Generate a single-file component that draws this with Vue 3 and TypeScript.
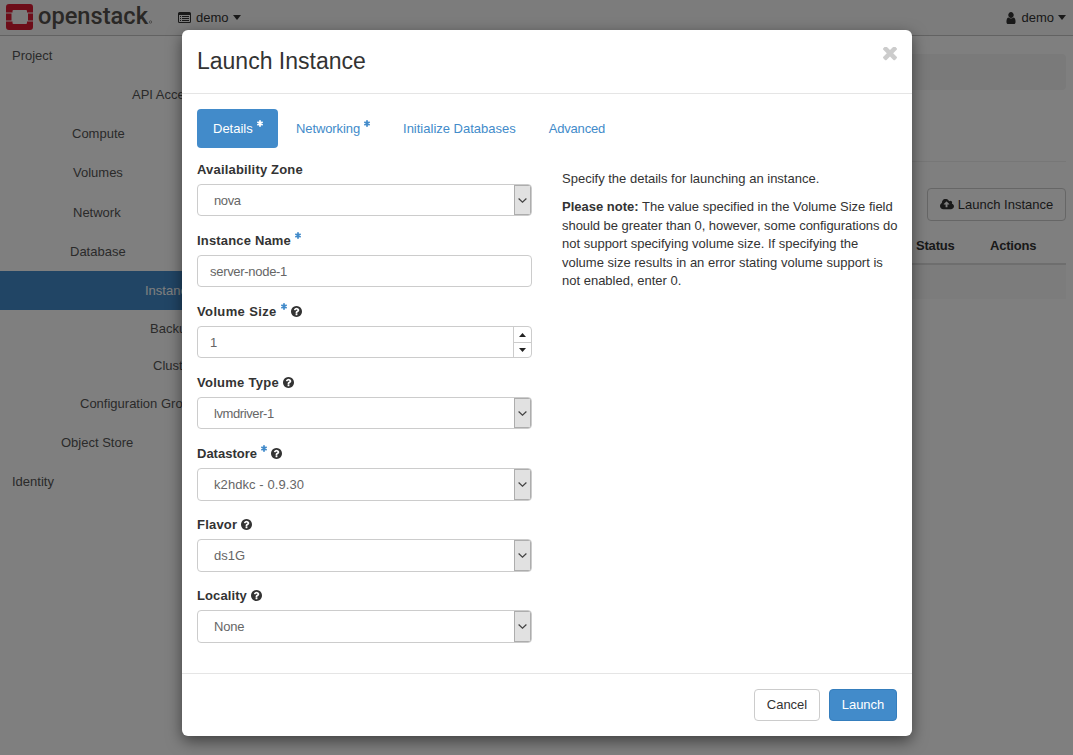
<script setup lang="ts">
interface NavItem { label: string; indent: number; height: number; active?: boolean }
interface Field { label: string; value: string; kind: 'select' | 'text' | 'number'; track?: number; valueTrack?: number; required?: boolean; help?: boolean; tall?: boolean }

const nav: NavItem[] = [
  { label: 'Project', indent: 12, height: 39 },
  { label: 'API Access', indent: 132, height: 39 },
  { label: 'Compute', indent: 72, height: 39 },
  { label: 'Volumes', indent: 73, height: 39 },
  { label: 'Network', indent: 73, height: 40 },
  { label: 'Database', indent: 70, height: 39 },
  { label: 'Instances', indent: 145, height: 39, active: true },
  { label: 'Backups', indent: 150, height: 37 },
  { label: 'Clusters', indent: 153, height: 37 },
  { label: 'Configuration Groups', indent: 80, height: 39 },
  { label: 'Object Store', indent: 61, height: 39 },
  { label: 'Identity', indent: 12, height: 39 },
]

const tabs = [
  { label: 'Details', required: true, active: true, track: 0 },
  { label: 'Networking', required: true, track: -0.1 },
  { label: 'Initialize Databases', track: 0 },
  { label: 'Advanced', track: -0.2 },
]

const fields: Field[] = [
  { label: 'Availability Zone', value: 'nova', kind: 'select', track: 0.18, valueTrack: -0.4 },
  { label: 'Instance Name', value: 'server-node-1', kind: 'text', track: 0.17, valueTrack: -0.3, required: true },
  { label: 'Volume Size', value: '1', kind: 'number', track: 0.37, required: true, help: true },
  { label: 'Volume Type', value: 'lvmdriver-1', kind: 'select', track: 0.27, valueTrack: -0.4, help: true },
  { label: 'Datastore', value: 'k2hdkc - 0.9.30', kind: 'select', valueTrack: 0.08, required: true, help: true, tall: true },
  { label: 'Flavor', value: 'ds1G', kind: 'select', track: 0.2, help: true, tall: true },
  { label: 'Locality', value: 'None', kind: 'select', track: 0.1, valueTrack: -0.2, help: true, tall: true },
]

const spacing = (v?: number) => ({ letterSpacing: (v ?? 0) + 'px' })
</script>

<template>
  <div class="screen">
    <header class="topbar">
      <svg class="brand" width="150" height="35" viewBox="0 0 150 35">
        <g fill="#da1a32">
          <path d="M3 4h21a3 3 0 0 1 3 3v5.500h-6V11a1 1 0 0 0-1-1H7.500a1 1 0 0 0-1 1v1.500H0V7a3 3 0 0 1 3-3z" />
          <path d="M0 13.500h5.500V20.500H0zM22 13.500h5V20.500h-5z" />
          <path d="M0 21.500h6.500V23a1 1 0 0 0 1 1H20a1 1 0 0 0 1-1v-1.500h6V27a3 3 0 0 1-3 3H3a3 3 0 0 1-3-3z" />
        </g>
        <text class="wordmark" x="32" y="23.700" textLength="110" lengthAdjust="spacingAndGlyphs">openstack</text>
        <circle cx="144.500" cy="22" r="1.200" fill="none" stroke="#8a8683" stroke-width=".8" />
      </svg>
      <div class="menu project">
        <svg width="13" height="11" viewBox="0 0 13 11">
          <path d="M1.500 0h10A1.500 1.500 0 0 1 13 1.500v8a1.500 1.500 0 0 1-1.500 1.500h-10A1.500 1.500 0 0 1 0 9.500v-8A1.500 1.500 0 0 1 1.500 0zM1 3v6.500q0 .5.500.5h10q.5 0 .5-.5V3z" fill="#333" fill-rule="evenodd" />
          <path d="M2 4h1v1H2zM4 4h7v1H4zM2 6h1v1H2zM4 6h7v1H4zM2 8h1v1H2zM4 8h7v1H4z" fill="#333" />
        </svg>
        <span>demo</span><i class="caret" />
      </div>
      <div class="menu user">
        <svg width="10" height="12" viewBox="192 128 1408 1536" preserveAspectRatio="none"><path fill="#333" d="M1536 1399q0 109-62.500 187t-150.500 78h-854q-88 0-150.500-78t-62.500-187q0-85 8.500-160.500t31.500-152 58.500-131 94-89 134.500-34.500q131 128 313 128t313-128q76 0 134.500 34.500t94 89 58.500 131 31.500 152 8.500 160.500zm-256-887q0 159-112.500 271.500t-271.500 112.500-271.500-112.500-112.500-271.500 112.500-271.500 271.500-112.500 271.500 112.500 112.500 271.500z" /></svg>
        <span>demo</span><i class="caret" />
      </div>
    </header>

    <div class="page">
      <nav class="sidebar">
        <a v-for="n in nav" :key="n.label" :class="{ active: n.active }" :style="{ paddingLeft: n.indent + 'px', height: n.height + 'px' }">{{ n.label }}</a>
      </nav>
      <main class="content">
        <div class="breadcrumb" />
        <div class="title-rule" />
        <button class="btn launch-top">
          <svg width="14" height="11" viewBox="-96 256 1920 1280"><path fill="#333" d="M1216 864q0-14-9-23l-352-352q-9-9-23-9t-23 9l-351 351q-10 12-10 24 0 14 9 23t23 9h224v352q0 13 9.500 22.500t22.500 9.500h192q13 0 22.500-9.500t9.500-22.500v-352h224q13 0 22.500-9.500t9.500-22.500zm640 288q0 159-112.500 271.500t-271.500 112.500h-1088q-185 0-316.500-131.500t-131.500-316.500q0-130 70-240t188-165q-2-30-2-43 0-212 150-362t362-150q156 0 285.500 87t188.500 231q71-62 166-62 106 0 181 75t75 181q0 76-41 138 130 31 213.500 135.500t83.500 238.500z" transform="translate(-32 0)" /></svg>
          <span>Launch Instance</span>
        </button>
        <div class="thead"><b>Status</b><b>Actions</b></div>
        <div class="trow" />
      </main>
    </div>

    <div class="backdrop">
      <section class="modal">
        <div class="modal-head">
          <h3>Launch Instance</h3>
          <svg class="close" width="14" height="14" viewBox="302 430 1188 1188"><path fill="#ccc" d="M1490 1322q0 40-28 68l-136 136q-28 28-68 28t-68-28l-294-294-294 294q-28 28-68 28t-68-28l-136-136q-28-28-28-68t28-68l294-294-294-294q-28-28-28-68t28-68l136-136q28-28 68-28t68 28l294 294 294-294q28-28 68-28t68 28l136 136q28 28 28 68t-28 68l-294 294 294 294q28 28 28 68z" /></svg>
        </div>
        <div class="modal-body">
          <div class="tabs">
            <a v-for="t in tabs" :key="t.label" :class="{ active: t.active }">
              <span :style="spacing(t.track)">{{ t.label }}</span>
              <svg v-if="t.required" class="star" width="6" height="7" viewBox="0 0 6 7"><path d="M3 .2v6.600M.3 1.900l5.400 3.200M5.700 1.900L.3 5.100" stroke="currentColor" stroke-width="1.800" /></svg>
            </a>
          </div>
          <div class="columns">
            <div class="form">
              <div v-for="f in fields" :key="f.label" class="field">
                <label>
                  <span :style="spacing(f.track)">{{ f.label }}</span>
                  <svg v-if="f.required" class="star" width="6" height="7" viewBox="0 0 6 7"><path d="M3 .2v6.600M.3 1.900l5.400 3.200M5.700 1.900L.3 5.100" stroke="currentColor" stroke-width="1.800" /></svg>
                  <svg v-if="f.help" class="help" width="11" height="11" viewBox="128 128 1536 1536"><path fill="#333" d="M1024 1376v-192q0-14-9-23t-23-9h-192q-14 0-23 9t-9 23v192q0 14 9 23t23 9h192q14 0 23-9t9-23zm256-672q0-88-55.500-163t-138.500-116-170-41q-243 0-371 213-15 24 8 42l132 100q7 6 19 6 16 0 25-12 53-68 86-92 34-24 86-24 48 0 85.500 26t37.500 59q0 38-20 61t-68 45q-63 28-115.500 86.500t-52.500 125.500v36q0 14 9 23t23 9h192q14 0 23-9t9-23q0-19 21.500-49.500t54.500-49.500q32-18 49-28.500t46-35 44.500-48 28-60.500 12.500-81zm384 192q0 209-103 385.500t-279.500 279.500-385.500 103-385.500-103-279.500-279.500-103-385.500 103-385.500 279.500-279.500 385.500-103 385.500 103 279.500 279.500 103 385.500z" /></svg>
                </label>
                <div class="control" :class="[f.kind, { tall: f.tall }]">
                  <span class="value" :style="spacing(f.valueTrack)">{{ f.value }}</span>
                  <div v-if="f.kind === 'select'" class="drop">
                    <svg width="9" height="5" viewBox="0 0 9 5"><path d="M.6.5L4.500 4.200 8.400.5" fill="none" stroke="#444" stroke-width="1.200" /></svg>
                  </div>
                  <div v-if="f.kind === 'number'" class="spin">
                    <div><svg width="7" height="4" viewBox="0 0 7 4"><path d="M0 4L3.500 0 7 4z" fill="#222" /></svg></div>
                    <div><svg width="7" height="4" viewBox="0 0 7 4"><path d="M0 0L3.500 4 7 0z" fill="#222" /></svg></div>
                  </div>
                </div>
              </div>
            </div>
            <div class="notes">
              <p>Specify the details for launching an instance.</p>
              <p><b>Please note:</b> The value specified in the Volume Size field<br><span class="tight">should be greater than 0, however, some configurations do</span><br>not support specifying volume size. If specifying the<br>volume size results in an error stating volume support is<br>not enabled, enter 0.</p>
            </div>
          </div>
        </div>
        <div class="modal-foot">
          <button class="btn">Cancel</button>
          <button class="btn primary">Launch</button>
        </div>
      </section>
    </div>
  </div>
</template>

<style>
body { margin: 0; overflow: hidden; }
</style>

<style scoped>
* { box-sizing: border-box; }
.screen { position: relative; width: 1073px; height: 755px; overflow: hidden; background: #fff; color: #333; font: 13px/18.500px "Liberation Sans", Arial, sans-serif; }
svg { display: block; flex: none; }
.brand { overflow: visible; }
.topbar { display: flex; height: 36px; padding: 0 7px 0 6px; background: #f8f8f8; border-bottom: 1px solid #c4c4c4; }
.wordmark { font: 500 24.500px Roboto, sans-serif; fill: #55504c; }
.menu { display: flex; align-items: center; height: 35px; }
.project { margin-left: 22px; }
.user { margin-left: auto; }
.menu span { margin-left: 5px; padding-top: 1px; }
.caret { width: 0; height: 0; margin-left: 4px; border: 4px solid transparent; border-top: 5px solid #333; border-bottom: 0; }
.page { display: flex; height: 719px; }
.sidebar { width: 230px; flex: none; }
.sidebar a { display: flex; align-items: center; padding-top: 2px; color: #555; white-space: nowrap; }
.sidebar .active { background: #428bca; color: #fff; }
.content { flex: 1; display: flex; flex-direction: column; padding: 18px 7px 0 20px; }
.breadcrumb { height: 36px; background: #f5f5f5; border-radius: 4px; }
.title-rule { height: 72px; border-bottom: 1px solid #eee; }
.btn { display: flex; align-items: center; justify-content: center; height: 32px; padding: 0; border: 1px solid #ccc; border-radius: 4px; background: #fff; color: #333; font: inherit; width: 66px; }
.launch-top { align-self: flex-end; width: 139px; height: 33px; margin-top: 26px; gap: 4px; }
.launch-top span { padding-top: 2px; }
.thead { display: flex; height: 44px; border-bottom: 2px solid #ddd; padding: 16px 0 0 666px; }
.thead b { width: 74px; flex: none; letter-spacing: -.2px; }
.trow { height: 34px; background: #f9f9f9; }
.backdrop { position: absolute; inset: 0; padding: 30px 161px 0 182px; background: rgba(0, 0, 0, .5); }
.modal { height: 706px; display: flex; flex-direction: column; background: #fff; border-radius: 6px; box-shadow: 0 5px 15px rgba(0, 0, 0, .5); }
.modal-head { display: flex; justify-content: space-between; height: 64px; padding: 17px 15px 0 15px; border-bottom: 1px solid #e5e5e5; }
h3 { margin: 0; font-size: 23px; font-weight: 400; line-height: 28px; }
.modal-body { flex: 1; padding: 15px; }
.tabs { display: flex; gap: 2px; }
.tabs a { display: flex; align-items: center; height: 39px; padding: 1px 15px 0 16px; color: #428bca; border-radius: 4px; white-space: nowrap; }
.tabs .active { width: 81px; background: #428bca; color: #fff; }
.tabs span { padding-top: 1px; }
.star { margin: -11px 0 0 4px; color: #428bca; }
label .star { margin-top: -10px; }
.active .star { color: #fff; }
.columns { display: grid; grid-template-columns: 335px 335px; gap: 30px; padding-top: 12px; }
.form { display: grid; grid-auto-rows: 71px; }
label { display: flex; align-items: center; height: 19px; margin-bottom: 5px; font-weight: 700; white-space: nowrap; }
label span { padding-top: 2px; }
.help { margin-left: 4px; }
.control { display: flex; align-items: stretch; height: 32px; border: 1px solid #ccc; border-radius: 4px; overflow: hidden; color: #666; }
.tall { height: 33px; }
.value { flex: 1; align-self: center; padding: 2px 0 0 12px; }
.select .value { padding-left: 16px; }
.drop { display: flex; align-items: center; justify-content: center; width: 17px; padding-right: 1px; background: #e1e1e1; border: 1px solid #adadad; }
.spin { width: 18px; border-left: 1px solid #ccc; }
.spin div { display: flex; height: 15px; align-items: center; justify-content: center; }
.spin div + div { border-top: 1px solid #ccc; }
.notes { padding-top: 10px; }
.notes p { margin: 0 0 9.500px; white-space: nowrap; }
.tight { letter-spacing: -.05px; }
.modal-foot { display: flex; justify-content: flex-end; gap: 9px; height: 63px; padding: 15px; border-top: 1px solid #e5e5e5; }
.primary { width: 68px; background: #428bca; border-color: #357ebd; color: #fff; }
</style>
